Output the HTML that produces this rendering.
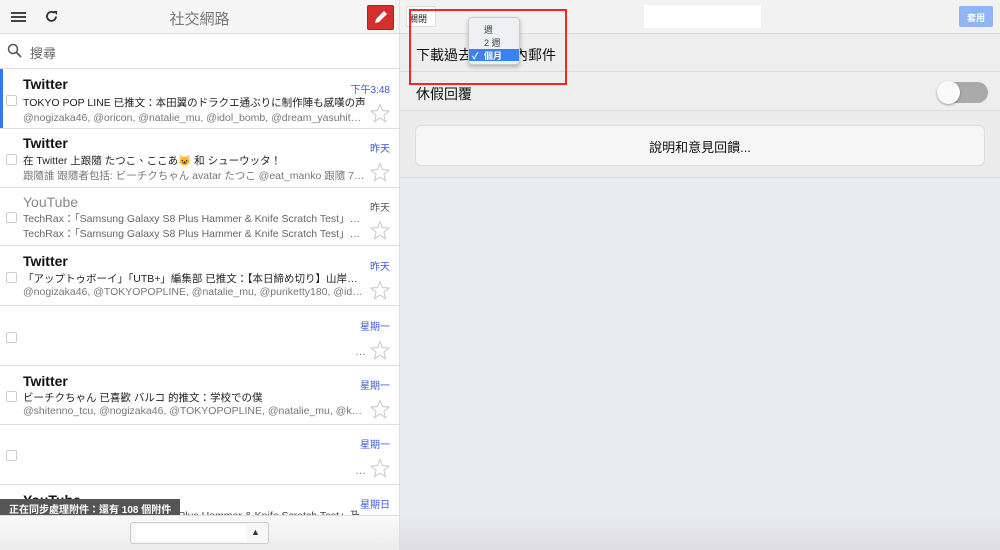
<!DOCTYPE html>
<html><head><meta charset="utf-8"><style>
*{margin:0;padding:0;box-sizing:border-box}
body{width:1000px;height:550px;overflow:hidden;font-family:"Liberation Sans","Noto Sans CJK TC",sans-serif;background:#fff;position:relative}
.abs{position:absolute}
.left{position:absolute;left:0;top:0;width:399px;height:550px;background:#fff;overflow:hidden}
.hdr{position:absolute;left:0;top:0;width:399px;height:34px;background:#f5f5f5;border-bottom:1px solid #ddd}
.srch{position:absolute;left:0;top:34px;width:399px;height:35px;border-bottom:1px solid #ddd}
.row{position:absolute;left:0;width:399px;border-bottom:1px solid #ddd;background:#fff}
.cb{position:absolute;left:6px;width:11px;height:11px;border:1px solid #ccc;border-radius:2px}
.from{position:absolute;left:23px;font-size:14px;font-weight:bold;color:#111}
.l1,.l2{position:absolute;left:23px;width:343px;font-size:10.5px;white-space:nowrap;overflow:hidden;text-overflow:ellipsis}
.l1{color:#222}.l2{color:#777}
.date{position:absolute;right:9px;font-size:10px;color:#3b5bdb}
.star{position:absolute;right:9px;width:20px;height:20px}
.right{position:absolute;left:399px;top:0;width:601px;height:550px;background:#eaebed;border-left:1px solid #ddd}
</style></head><body>
<svg width="0" height="0" style="position:absolute"><defs><symbol id="st" viewBox="0 0 20 20"><path d="M10 1.5L12.4 7.6L19 8L13.9 12.2L15.6 18.6L10 15L4.4 18.6L6.1 12.2L1 8L7.6 7.6Z" fill="none" stroke="#c8c8c8" stroke-width="1"/></symbol></defs></svg>
<div class="left">
 <div class="hdr">
  <div class="abs" style="left:11px;top:12px;width:15px;height:2px;background:#444;box-shadow:0 4px 0 #444,0 8px 0 #444"></div>
  <svg class="abs" style="left:45px;top:10px" width="13" height="13" viewBox="0 0 13 13"><path d="M11 6.5A4.5 4.5 0 1 1 9.5 3" fill="none" stroke="#333" stroke-width="1.8"/><path d="M8 1L12 1L12 5Z" fill="#333"/></svg>
  <div class="abs" style="left:0;width:399px;top:8px;text-align:center;font-size:15px;color:#777">社交網路</div>
  <div class="abs" style="left:367px;top:5px;width:27px;height:25px;background:#d32f2f;border-radius:2px;border:1px solid #b71c1c">
   <svg width="25" height="23" viewBox="0 0 25 23"><path d="M7 17L8 13L16 5L19 8L11 16Z" fill="#fff"/></svg>
  </div>
 </div>
 <div class="srch">
  <svg class="abs" style="left:7px;top:9px" width="15" height="15" viewBox="0 0 15 15"><circle cx="6" cy="6" r="4.5" fill="none" stroke="#555" stroke-width="1.5"/><path d="M9.5 9.5L14 14" stroke="#555" stroke-width="1.7"/></svg>
  <div class="abs" style="left:30px;top:9px;font-size:13px;color:#666">搜尋</div>
 </div>

 <div class="row" style="top:69px;height:60px">
  <div class="abs" style="left:0;top:0;width:3px;height:59px;background:#3b73f5"></div>
  <div class="from" style="top:7px">Twitter</div><div class="date" style="top:12px">下午3:48</div>
  <div class="cb" style="top:26px"></div>
  <div class="l1" style="top:26px">TOKYO POP LINE 已推文：本田翼のドラクエ通ぶりに制作陣も感嘆の声</div>
  <div class="l2" style="top:41px">@nogizaka46, @oricon, @natalie_mu, @idol_bomb, @dream_yasuhito 也已加入加入</div>
  <svg class="star" style="top:34px"><use href="#st"/></svg>
 </div>
 <div class="row" style="top:129px;height:59px">
  <div class="from" style="top:6px">Twitter</div><div class="date" style="top:11px">昨天</div>
  <div class="cb" style="top:25px"></div>
  <div class="l1" style="top:24px">在 Twitter 上跟隨 たつこ、ここあ😺 和 シューウッタ！</div>
  <div class="l2" style="top:39px">跟隨誰 跟隨者包括: ビーチクちゃん avatar たつこ @eat_manko 跟隨 750 人人人</div>
  <svg class="star" style="top:33px"><use href="#st"/></svg>
 </div>
 <div class="row" style="top:188px;height:58px">
  <div class="from" style="top:6px;font-weight:normal;color:#888">YouTube</div><div class="date" style="top:11px;color:#555">昨天</div>
  <div class="cb" style="top:24px"></div>
  <div class="l1" style="top:23px;color:#666">TechRax：「Samsung Galaxy S8 Plus Hammer &amp; Knife Scratch Test」及其他其他</div>
  <div class="l1" style="top:38px;color:#666">TechRax：「Samsung Galaxy S8 Plus Hammer &amp; Knife Scratch Test」及其他其他</div>
  <svg class="star" style="top:32px"><use href="#st"/></svg>
 </div>
 <div class="row" style="top:246px;height:60px">
  <div class="from" style="top:7px">Twitter</div><div class="date" style="top:12px">昨天</div>
  <div class="cb" style="top:26px"></div>
  <div class="l1" style="top:25px">「アップトゥボーイ」「UTB+」編集部 已推文：【本日締め切り】山岸理子理子</div>
  <div class="l2" style="top:40px">@nogizaka46, @TOKYOPOPLINE, @natalie_mu, @puriketty180, @idol_bomb_bomb</div>
  <svg class="star" style="top:34px"><use href="#st"/></svg>
 </div>
 <div class="row" style="top:306px;height:60px">
  <div class="date" style="top:12px">星期一</div>
  <div class="cb" style="top:26px"></div>
  <div class="abs" style="right:33px;top:40px;font-size:11px;color:#777">…</div>
  <svg class="star" style="top:34px"><use href="#st"/></svg>
 </div>
 <div class="row" style="top:366px;height:59px">
  <div class="from" style="top:7px">Twitter</div><div class="date" style="top:11px">星期一</div>
  <div class="cb" style="top:25px"></div>
  <div class="l1" style="top:24px">ビーチクちゃん 已喜歡 バルコ 的推文：学校での僕</div>
  <div class="l2" style="top:39px">@shitenno_tcu, @nogizaka46, @TOKYOPOPLINE, @natalie_mu, @kyz46_tomomi</div>
  <svg class="star" style="top:33px"><use href="#st"/></svg>
 </div>
 <div class="row" style="top:425px;height:60px">
  <div class="date" style="top:11px">星期一</div>
  <div class="cb" style="top:25px"></div>
  <div class="abs" style="right:33px;top:40px;font-size:11px;color:#777">…</div>
  <svg class="star" style="top:33px"><use href="#st"/></svg>
 </div>
 <div class="row" style="top:485px;height:40px;border:none">
  <div class="from" style="top:7px">YouTube</div><div class="date" style="top:11px">星期日</div>
  <div class="l1" style="top:23px;color:#444">TechRax：「Samsung Galaxy S8 Plus Hammer &amp; Knife Scratch Test」及</div>
 </div>
 <div class="abs" style="left:0;top:499px;width:180px;height:16px;background:#555;color:#fff;font-size:10px;font-weight:bold;padding:2px 0 0 9px;white-space:nowrap">正在同步處理附件：還有 108 個附件</div>
 <div class="abs" style="left:0;top:515px;width:399px;height:35px;background:linear-gradient(#fafafa,#ececec);border-top:1px solid #ddd">
  <div class="abs" style="left:130px;top:6px;width:139px;height:22px;background:#f7f7f7;border:1px solid #ccc;border-radius:3px">
   <div class="abs" style="left:5px;top:2px;width:110px;height:16px;background:#fff"></div>
   <div class="abs" style="left:120px;top:4px;font-size:9px;color:#333">▲</div>
  </div>
 </div>
</div>

<div class="right">
 <div class="abs" style="left:0;top:0;width:601px;height:34px;background:#f2f2f2;border-bottom:1px solid #ddd"></div>
 <div class="abs" style="left:6px;top:6px;width:30px;height:21px;background:#fff;border:1px solid #ddd;border-radius:2px;font-size:9px;padding:5px 0 0 2px;color:#222">關閉</div>
 <div class="abs" style="left:244px;top:5px;width:117px;height:23px;background:#fff"></div>
 <div class="abs" style="left:559px;top:6px;width:34px;height:21px;background:#8fb6f4;border-radius:2px;color:#fff;font-size:9px;font-weight:bold;text-align:center;padding-top:5px">套用</div>
 <div class="abs" style="left:0;top:35px;width:601px;height:37px;background:#eeeeee;border-bottom:1px solid #ddd"></div>
 <div class="abs" style="left:16px;top:45px;font-size:14px;color:#111">下載過去<span style="visibility:hidden">一個月</span>內郵件</div>
 <div class="abs" style="left:0;top:72px;width:601px;height:39px;background:#eeeeee;border-bottom:1px solid #ddd"></div>
 <div class="abs" style="left:16px;top:84px;font-size:14px;color:#111">休假回覆</div>
 <div class="abs" style="left:538px;top:82px;width:50px;height:21px;background:#aaa;border-radius:11px"></div>
 <div class="abs" style="left:537px;top:81px;width:23px;height:23px;background:#fafafa;border-radius:50%;box-shadow:0 1px 2px rgba(0,0,0,.35)"></div>
 <div class="abs" style="left:0;top:112px;width:601px;height:66px;background:#ececec;border-bottom:1px solid #ddd"></div>
 <div class="abs" style="left:15px;top:125px;width:570px;height:41px;background:#f6f6f6;border:1px solid #ddd;border-radius:6px;text-align:center;font-size:13px;padding-top:11px;color:#111">說明和意見回饋...</div>
 <div class="abs" style="left:0;top:515px;width:601px;height:35px;background:linear-gradient(#eaebed,#dedee0)"></div>
 <div class="abs" style="left:68px;top:17px;width:52px;height:48px;background:#eef0f3;border:1px solid #ccc;border-radius:4px;box-shadow:0 2px 4px rgba(0,0,0,.25);font-size:9px;color:#444">
  <div class="abs" style="left:15px;top:5px">週</div>
  <div class="abs" style="left:15px;top:18px">2 週</div>
  <div class="abs" style="left:0;top:31px;width:50px;height:12px;background:#3b82f0;color:#fff;font-weight:bold"><span style="position:absolute;left:3px;top:0">✓</span><span style="position:absolute;left:15px;top:0">個月</span></div>
 </div>
 <div class="abs" style="left:9px;top:9px;width:158px;height:76px;border:2px solid #f02a22"></div>
</div>
</body></html>
